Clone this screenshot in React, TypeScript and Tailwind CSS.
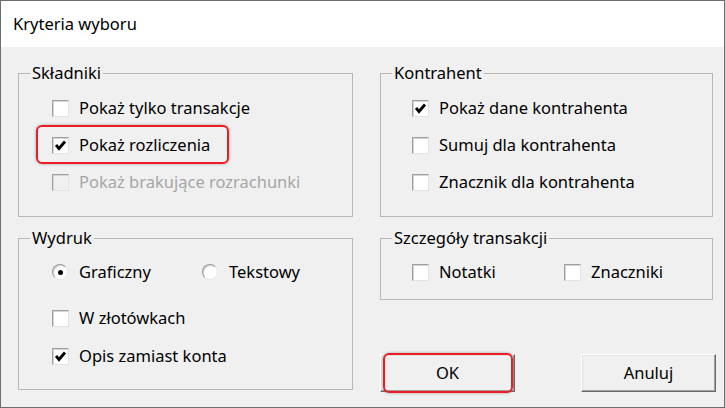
import React from "react";

type BoxProps = { checked?: boolean; disabled?: boolean };

// Sunken 3D checkbox square with a classic tick
function CheckBox({ checked, disabled }: BoxProps) {
  return (
    <span
      className={`flex w-[17px] h-[17px] shrink-0 items-center justify-center border border-t-[#a0a0a0] border-l-[#a0a0a0] border-b-[#e3e3e3] border-r-[#e3e3e3] shadow-[inset_1px_1px_0_#d4d4d4] ${
        disabled ? "bg-[#f0f0f0]" : "bg-white"
      }`}
    >
      {checked && (
        <svg width="13" height="13" viewBox="0 0 13 13">
          <path d="M2 6 L5 9.5 L11 2.5" fill="none" stroke="#000" strokeWidth="2.8" />
        </svg>
      )}
    </span>
  );
}

function Radio({ checked }: { checked?: boolean }) {
  return (
    <span className="flex w-[16px] h-[16px] shrink-0 items-center justify-center rounded-full bg-white border border-t-[#9a9a9a] border-l-[#9a9a9a] border-b-[#e8e8e8] border-r-[#e8e8e8] shadow-[inset_1px_1px_0_#d0d0d0]">
      {checked && <span className="w-[5px] h-[5px] rounded-full bg-black" />}
    </span>
  );
}

function CheckRow({ label, checked, disabled }: BoxProps & { label: string }) {
  return (
    <label className="flex h-6 items-center gap-[10px]">
      <CheckBox checked={checked} disabled={disabled} />
      <span className={disabled ? "text-[#a6a6a6]" : ""}>{label}</span>
    </label>
  );
}

function RadioRow({ label, checked }: { label: string; checked?: boolean }) {
  return (
    <label className="flex h-6 items-center gap-[11px]">
      <Radio checked={checked} />
      <span>{label}</span>
    </label>
  );
}

function Group({
  title,
  className,
  children,
}: {
  title: string;
  className: string;
  children: React.ReactNode;
}) {
  return (
    <fieldset className={`border border-[#b8b8b8] ${className}`}>
      <legend className="ml-[11px] px-[2px] leading-5">{title}</legend>
      {children}
    </fieldset>
  );
}

function Highlight({ className }: { className: string }) {
  return (
    <span
      className={`pointer-events-none absolute rounded-[6px] border-2 border-[#ec1c24] shadow-[0_0_3px_rgba(0,0,0,0.35)] ${className}`}
    />
  );
}

function Button({ label, children }: { label: string; children?: React.ReactNode }) {
  return (
    <button className="relative flex h-[38px] w-[135px] items-center justify-center bg-[#f0f0f0] border border-t-white border-l-white border-b-[#6b6b6b] border-r-[#6b6b6b] shadow-[inset_-1px_-1px_0_#a0a0a0,inset_1px_1px_0_#e3e3e3]">
      {label}
      {children}
    </button>
  );
}

export default function App() {
  return (
    <div className="flex h-[408px] w-[725px] flex-col overflow-hidden border border-[#6e6e6e] bg-[#f0f0f0] font-['Noto_Sans',sans-serif] text-[16.5px] text-black">
      <div className="flex h-[46px] shrink-0 items-center bg-white pl-3 text-[16.5px]">
        Kryteria wyboru
      </div>

      <div className="flex flex-1 gap-[27px] pl-[17px] pr-[11px] pt-4">
        <div className="flex w-[335px] flex-col gap-[11px]">
          <Group title="Składniki" className="h-[154px]">
            <div className="flex flex-col gap-[13px] pl-[33px] pt-[13px]">
              <CheckRow label="Pokaż tylko transakcje" />
              <div className="relative">
                <CheckRow label="Pokaż rozliczenia" checked />
                <Highlight className="-left-[16px] -top-[8px] h-[39px] w-[193px]" />
              </div>
              <CheckRow label="Pokaż brakujące rozrachunki" disabled />
            </div>
          </Group>

          <Group title="Wydruk" className="h-[162px]">
            <div className="flex flex-col pl-[33px] pt-[12px]">
              <div className="flex">
                <div className="w-[150px]">
                  <RadioRow label="Graficzny" checked />
                </div>
                <RadioRow label="Tekstowy" />
              </div>
              <div className="mt-[22px] flex flex-col gap-[14px]">
                <CheckRow label="W złotówkach" />
                <CheckRow label="Opis zamiast konta" checked />
              </div>
            </div>
          </Group>
        </div>

        <div className="flex w-[333px] flex-col">
          <Group title="Kontrahent" className="h-[154px]">
            <div className="flex flex-col gap-[13px] pl-[31px] pt-[13px]">
              <CheckRow label="Pokaż dane kontrahenta" checked />
              <CheckRow label="Sumuj dla kontrahenta" />
              <CheckRow label="Znacznik dla kontrahenta" />
            </div>
          </Group>

          <Group title="Szczegóły transakcji" className="mt-[11px] h-[72px]">
            <div className="flex pl-[31px] pt-[12px]">
              <div className="w-[152px]">
                <CheckRow label="Notatki" />
              </div>
              <CheckRow label="Znaczniki" />
            </div>
          </Group>

          <div className="mt-[54px] flex justify-between">
            <Button label="OK">
              <Highlight className="left-[2px] -top-[2px] h-[40px] w-[130px]" />
            </Button>
            <div className="-mr-[3px]">
              <Button label="Anuluj" />
            </div>
          </div>
        </div>
      </div>
    </div>
  );
}
